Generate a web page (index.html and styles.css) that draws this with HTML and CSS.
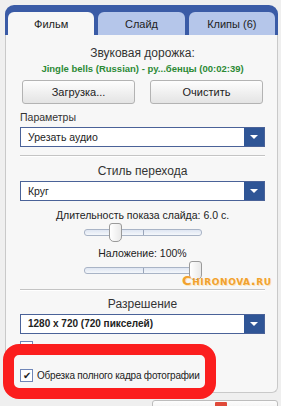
FILE: index.html
```html
<!DOCTYPE html>
<html lang="ru">
<head>
    <meta charset="UTF-8">
    <meta name="viewport" content="width=device-width, initial-scale=1.0">
    <title>Фильм</title>
    <link rel="stylesheet" href="styles.css">
</head>
<body>
    <div class="window">
        <div class="tabs">
            <div class="tab active">Фильм</div>
            <div class="tab">Слайд</div>
            <div class="tab">Клипы (6)</div>
        </div>

        <div class="panel">
            <div class="title audio-title">Звуковая дорожка:</div>
            <div class="track-name">Jingle bells (Russian) - py...бенцы (00:02:39)</div>

            <div class="button-row">
                <button class="btn">Загрузка...</button>
                <button class="btn">Очистить</button>
            </div>

            <label class="field-label">Параметры</label>
            <div class="select first-select">
                <span class="select-text">Урезать аудио</span>
                <span class="select-arrow"></span>
            </div>

            <div class="separator"></div>

            <div class="title">Стиль перехода</div>
            <div class="select">
                <span class="select-text">Круг</span>
                <span class="select-arrow"></span>
            </div>

            <div class="caption">Длительность показа слайда: 6.0 с.</div>
            <div class="slider">
                <div class="slider-track"></div>
                <div class="slider-thumb" style="left: 25px"></div>
            </div>

            <div class="caption second">Наложение: 100%</div>
            <div class="slider">
                <div class="slider-track"></div>
                <div class="slider-thumb" style="left: 105px"></div>
            </div>

            <div class="separator lower"></div>

            <div class="title res-title">Разрешение</div>
            <div class="select">
                <span class="select-text bold">1280 x 720 (720 пикселей)</span>
                <span class="select-arrow"></span>
            </div>

            <div class="check-row hidden-row">
                <span class="checkbox"></span>
            </div>
            <div class="check-row">
                <span class="checkbox checked">&#10004;</span>
                <span class="check-text">Обрезка полного кадра фотографии</span>
            </div>
        </div>

        <div class="bottom-bar">
            <div class="bottom-button"><span class="bottom-icon"></span></div>
        </div>

        <div class="highlight"></div>
        <div class="watermark">Chironova.ru</div>
    </div>
</body>
</html>
```

FILE: styles.css
```css
body {
    margin: 0;
    background-color: #efefef;
    font-family: "Liberation Sans", Arial, sans-serif;
    color: #222;
    overflow: hidden;
}

.window {
    position: relative;
    width: 273px;
    padding: 5px 0 0 5px;
    height: 401px;
}

/* Вкладки */
.tabs {
    display: flex;
    gap: 4px;
    height: 23px;
    padding: 7px 3px 0 3px;
    background-color: #3a5ba6;
    border-radius: 9px 9px 0 0;
}

.tab {
    flex: 1;
    display: flex;
    align-items: center;
    justify-content: center;
    padding-top: 1px;
    font-size: 11px;
    color: #222;
    background-color: #b5c6ea;
    border-radius: 6px 6px 0 0;
}

.tab.active {
    background-color: #f7f7f7;
}

/* Панель */
.panel {
    padding: 1px 12px 0 14px;
    background-color: #f7f7f7;
    border: 1px solid #c9c9c9;
    border-top: none;
    border-radius: 0 0 6px 6px;
    box-sizing: border-box;
    height: 358px;
}

.title {
    text-align: center;
    font-size: 12px;
    line-height: 16px;
    color: #333;
    margin-top: 7px;
}

.audio-title {
    margin-top: 9px;
}

.res-title {
    margin-top: 6px;
}

.track-name {
    text-align: center;
    font-size: 9.5px;
    font-weight: bold;
    line-height: 12px;
    color: #2c8a35;
    margin-top: 2px;
    white-space: nowrap;
}

.button-row {
    display: flex;
    justify-content: space-between;
    padding: 0 2px;
    margin-top: 5px;
}

.btn {
    width: 113px;
    height: 24px;
    font-family: inherit;
    font-size: 11px;
    color: #222;
    background: linear-gradient(#fdfdfd, #e4e4e4);
    border: 1px solid #b3b3b3;
    border-radius: 3px;
    padding: 0;
}

.field-label {
    display: block;
    font-size: 10.5px;
    line-height: 12px;
    margin-top: 7px;
    color: #333;
}

.select {
    display: flex;
    height: 20px;
    margin-top: 2px;
    background-color: #fff;
    border: 1px solid #4a6298;
    box-sizing: border-box;
}

.first-select {
    margin-top: 4px;
}

.select-text {
    flex: 1;
    font-size: 10.5px;
    line-height: 18px;
    padding-left: 7px;
    color: #222;
}

.select-text.bold {
    font-weight: bold;
    font-size: 10px;
}

.select-arrow {
    width: 20px;
    background-color: #2f5596;
    position: relative;
}

.select-arrow::after {
    content: "";
    position: absolute;
    left: 6px;
    top: 7px;
    border-left: 4px solid transparent;
    border-right: 4px solid transparent;
    border-top: 4px solid #fff;
}

.separator {
    height: 1px;
    background-color: #c4c4c4;
    margin-top: 8px;
    box-shadow: 0 1px 0 #fff;
}

.separator.lower {
    margin-top: 9px;
}

.caption {
    text-align: center;
    font-size: 10.5px;
    line-height: 12px;
    margin-top: 8px;
    color: #222;
}

.caption.second {
    margin-top: 5px;
}

/* Ползунки */
.slider {
    position: relative;
    width: 118px;
    height: 19px;
    margin: 2px auto 0;
}

.slider-track {
    position: absolute;
    left: 0;
    right: 0;
    top: 6px;
    height: 5px;
    background: linear-gradient(#dfe6f2, #f4f7fb);
    border: 1px solid #a9b4c6;
    border-radius: 3px;
}

.slider-track::after {
    content: "";
    position: absolute;
    left: 58px;
    top: 0;
    width: 1px;
    height: 5px;
    background-color: #9aa6ba;
}

.slider-thumb {
    position: absolute;
    top: 0;
    width: 11px;
    height: 17px;
    background: linear-gradient(90deg, #ffffff, #e9e9e9);
    border: 1px solid #9a9a9a;
    border-radius: 3px 3px 5px 5px;
}

/* Флажки */
.check-row {
    display: flex;
    align-items: center;
    gap: 4px;
    margin-top: 7px;
    height: 13px;
}

.check-row + .check-row {
    margin-top: 15px;
}

.checkbox {
    width: 11px;
    height: 11px;
    border: 1px solid #6f86b8;
    background-color: #fff;
    font-size: 10px;
    line-height: 11px;
    text-align: center;
    color: #222;
}

.check-text {
    font-size: 10px;
    letter-spacing: -0.2px;
    color: #222;
    white-space: nowrap;
}

.bottom-bar {
    display: flex;
    justify-content: flex-end;
    margin-top: 7px;
}

.bottom-button {
    width: 124px;
    height: 12px;
    background: linear-gradient(#fdfdfd, #ececec);
    border: 1px solid #bdbdbd;
    border-radius: 3px;
    position: relative;
}

.bottom-icon {
    position: absolute;
    left: 62px;
    top: 1px;
    width: 12px;
    height: 8px;
    background-color: #e04a3a;
    border-radius: 1px;
}

/* Выделение и водяной знак */
.highlight {
    position: absolute;
    left: 3px;
    top: 344px;
    width: 191px;
    height: 33px;
    border: 11px solid #fb1e1e;
    border-radius: 16px;
}

.watermark {
    position: absolute;
    left: 182px;
    top: 273px;
    font-family: "DejaVu Sans", sans-serif;
    font-weight: bold;
    font-size: 13px;
    font-variant: small-caps;
    letter-spacing: 0.6px;
    color: #f2a12e;
    text-shadow: 1px 1px 0 #fde6b8;
}
```
